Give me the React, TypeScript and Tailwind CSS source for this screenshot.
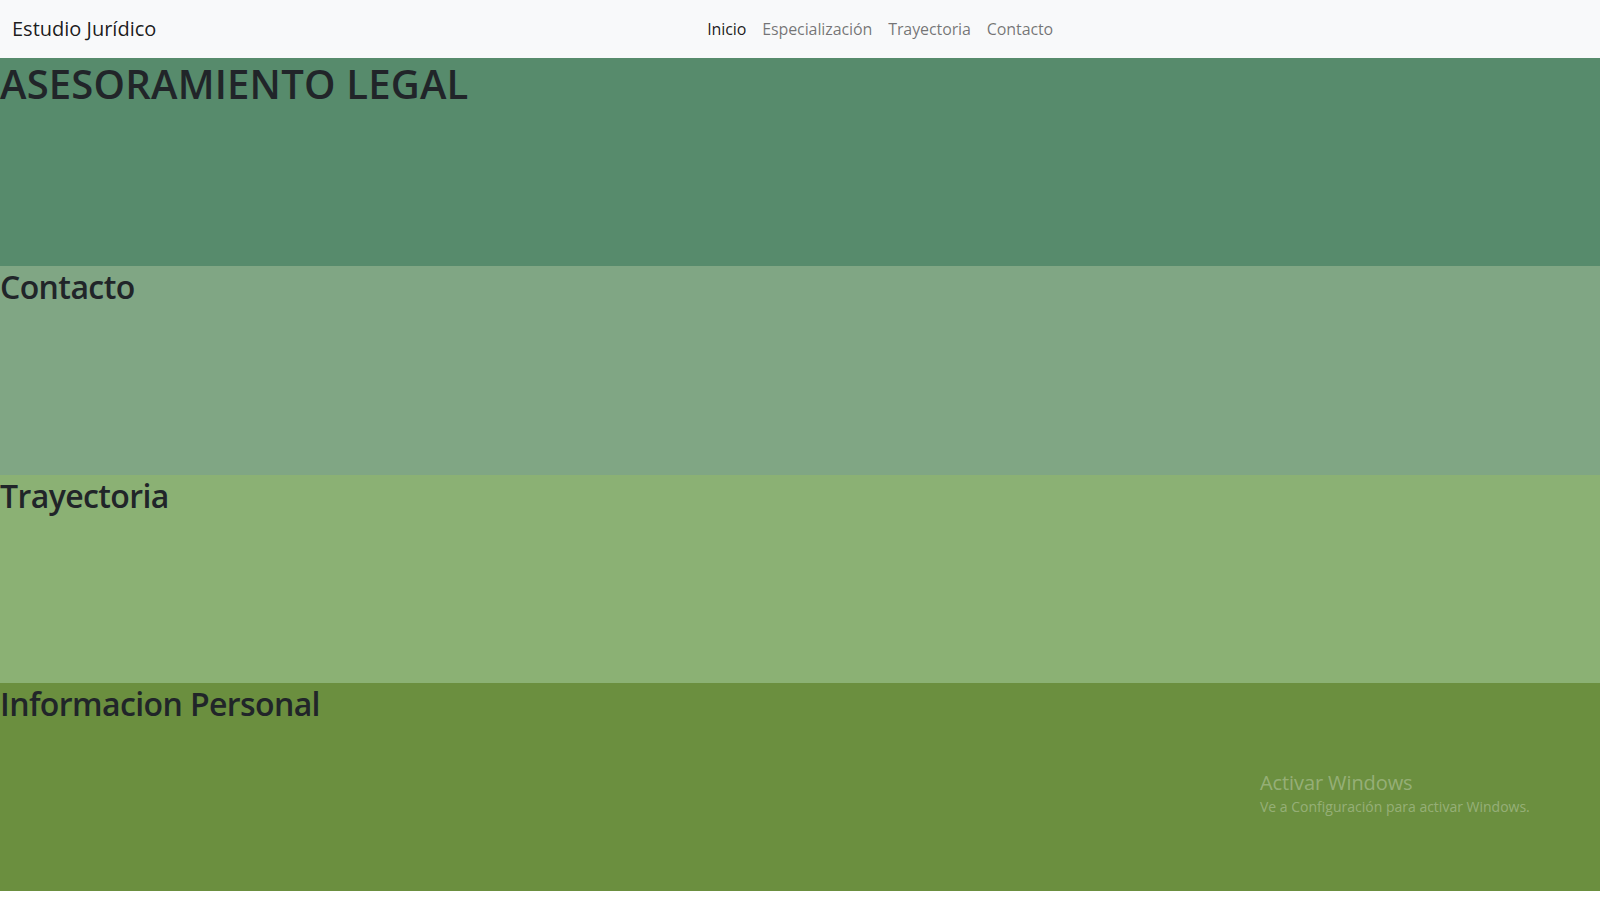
import React from 'react';

const font = { fontFamily: '"Open Sans", "Noto Sans", "Liberation Sans", sans-serif' };

const links = [
  { label: 'Inicio', active: true },
  { label: 'Especialización' },
  { label: 'Trayectoria' },
  { label: 'Contacto' },
];

const sections = [
  { title: 'ASESORAMIENTO LEGAL', bg: 'bg-[#578b6c]', big: true },
  { title: 'Contacto', bg: 'bg-[#80a684]' },
  { title: 'Trayectoria', bg: 'bg-[#8bb174]' },
  { title: 'Informacion Personal', bg: 'bg-[#6b8f3f]' },
];

export default function App() {
  return (
    <div className="relative min-h-screen bg-white text-[#212529]" style={font}>
      {/* navbar */}
      <nav className="flex h-[58px] items-center bg-[#f8f9fa] px-3 pb-px">
        <a className="mr-4 text-[20px] text-black/90">Estudio Jurídico</a>
        <ul className="flex flex-1 justify-center">
          {links.map((l) => (
            <li key={l.label}>
              <a className={`block px-2 text-[16px] tracking-[-0.1px] ${l.active ? 'text-black/90' : 'text-black/55'}`}>
                {l.label}
              </a>
            </li>
          ))}
        </ul>
      </nav>

      {/* sections */}
      {sections.map((s) => (
        <section key={s.title} className={`h-[208.3px] ${s.bg}`}>
          {s.big ? (
            <h1 className="pt-[2px] text-[40px] font-semibold leading-[1.2] tracking-[0.2px]">{s.title}</h1>
          ) : (
            <h2 className="pt-[2px] text-[32px] font-semibold leading-[1.2] tracking-[-0.6px]">{s.title}</h2>
          )}
        </section>
      ))}

      {/* OS watermark */}
      <div className="pointer-events-none absolute left-[1260px] top-[769px] text-white/30">
        <div className="text-[20px] leading-[28px] tracking-[-0.1px]">Activar Windows</div>
        <div className="text-[14px] leading-[20px]">Ve a Configuración para activar Windows.</div>
      </div>
    </div>
  );
}
